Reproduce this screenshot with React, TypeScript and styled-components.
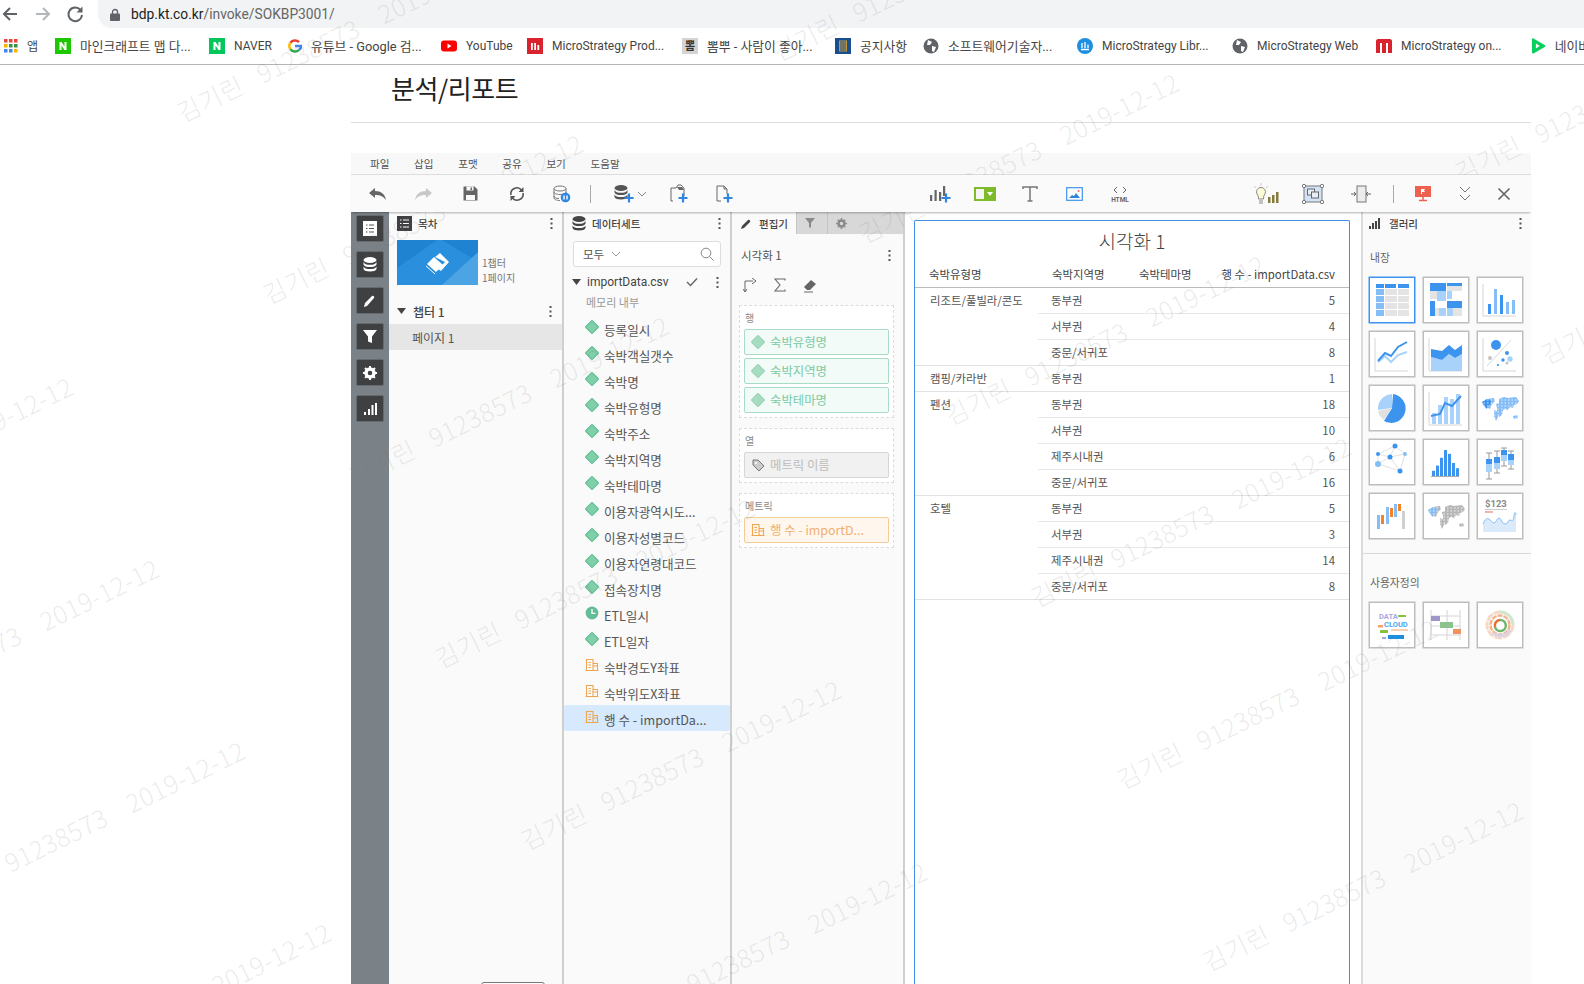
import React from 'react';
import styled, {createGlobalStyle} from 'styled-components';

const KR = `"Noto Sans CJK KR", sans-serif`;
const UI = `"Roboto", "Noto Sans CJK KR", sans-serif`;
const APP = `"Open Sans", "Noto Sans CJK KR", sans-serif`;
const BLUE = '#3d94ee';
const LIGHT = '#a9d2fb';
const MID = '#85bdf6';

const Global = createGlobalStyle`
  html, body { margin: 0; padding: 0; background: #fff; }
  * { box-sizing: border-box; }
`;
const Page = styled.div`
  position: relative;
  width: 1584px;
  height: 984px;
  overflow: hidden;
  display: flex;
  flex-direction: column;
  font-family: ${APP};
  color: #555;
`;
const TopBar = styled.div`
  height: 28px;
  flex: none;
  display: flex;
  align-items: center;
`;
const NavSlot = styled.div`
  width: 32.5px;
  height: 28px;
  flex: none;
  display: flex;
  align-items: center;
  justify-content: center;
  &:first-child { margin-left: -6px; }
`;
const UrlBar = styled.div`
  margin-left: 6.5px;
  flex: 1;
  height: 28px;
  background: #f1f3f4;
  border-radius: 0 0 0 14px;
  display: flex;
  align-items: center;
  padding-left: 12px;
  gap: 11px;
  font: 13.8px ${UI};
  color: #222;
`;
const UrlRest = styled.span`
  color: #666;
`;
const BookmarkBar = styled.div`
  height: 37px;
  flex: none;
  display: flex;
  align-items: center;
  padding: 0 0 1px 4px;
  border-bottom: 1px solid #b4b4b4;
  overflow: hidden;
`;
const Bookmark = styled.div<{$w: number; $kr?: boolean}>`
  width: ${p => p.$w}px;
  flex: none;
  display: flex;
  align-items: center;
  gap: 9px;
  font: ${p => (p.$kr ? 12.8 : 12)}px ${UI};
  color: #444;
  white-space: nowrap;
`;
const Content = styled.div`
  flex: 1;
  min-height: 0;
  margin-left: 351px;
  width: 1180px;
  display: flex;
  flex-direction: column;
`;
const PageTitle = styled.h1`
  margin: 0 0 30px;
  height: 58px;
  flex: none;
  padding: 3px 0 0 40px;
  border-bottom: 1px solid #ddd;
  font: 400 26px/40px ${KR};
  letter-spacing: -0.4px;
  color: #222;
`;
const MenuBar = styled.div`
  height: 22px;
  flex: none;
  background: #f8f8f8;
  border-bottom: 1px solid #ddd;
  display: flex;
  align-items: center;
  gap: 24.6px;
  padding-left: 19px;
  font: 10.6px ${KR};
  color: #555;
`;
const Toolbar = styled.div`
  height: 37px;
  flex: none;
  position: relative;
  z-index: 1;
  background: #fafafa;
  box-shadow: 0 2px 2px -1px rgba(0, 0, 0, 0.3);
  display: flex;
  align-items: center;
  padding-left: 5px;
`;
const ToolButton = styled.div<{$w: number; $ml?: number}>`
  width: ${p => p.$w}px;
  margin-left: ${p => p.$ml || 0}px;
  height: 36px;
  flex: none;
  display: flex;
  align-items: center;
  justify-content: center;
`;
const ToolSep = styled.div<{$w: number}>`
  width: ${p => p.$w}px;
  height: 18px;
  flex: none;
  display: flex;
  justify-content: center;
  &::after { content: ''; width: 1px; background: #aaa; }
`;
const ToolGap = styled.div`
  flex: 1;
`;
const Workspace = styled.div`
  flex: 1;
  min-height: 0;
  display: flex;
`;
const Rail = styled.div`
  width: 38px;
  flex: none;
  background: #7b8287;
  display: flex;
  flex-direction: column;
  align-items: center;
  gap: 9px;
  padding: 3px 1px 0 0;
`;
const RailButton = styled.div`
  width: 28px;
  height: 27px;
  background: #3f4042;
  border: 1px solid #666a6e;
  border-radius: 2px;
  display: flex;
  align-items: center;
  justify-content: center;
`;
const Panel = styled.div<{$w: number}>`
  width: ${p => p.$w}px;
  flex: none;
  background: #fafafa;
  border-right: 2px solid #cfcfcf;
  display: flex;
  flex-direction: column;
`;
const PanelHeader = styled.div<{$pad: number; $gap?: number}>`
  height: 23px;
  flex: none;
  display: flex;
  align-items: center;
  gap: ${p => p.$gap || 6}px;
  padding: 0 9px 0 ${p => p.$pad}px;
  font: 500 10.5px ${KR};
  color: #444;
`;
const Grow = styled.span`
  flex: 1;
`;
const ThumbRow = styled.div`
  display: flex;
  align-items: flex-end;
  gap: 4px;
  padding: 5px 0 0 8px;
`;
const ThumbInfo = styled.div`
  font: 10px/15px ${KR};
  color: #777;
`;
const ChapterRow = styled.div`
  display: flex;
  align-items: center;
  gap: 7px;
  margin-top: 15px;
  height: 22px;
  padding: 0 10px 0 8px;
  font: 500 12px ${KR};
  color: #444;
`;
const PageRow = styled.div`
  height: 26px;
  margin-top: 2px;
  background: #e6e6e6;
  display: flex;
  align-items: center;
  padding-left: 23px;
  font: 12px ${KR};
  color: #555;
`;
const SearchBox = styled.div`
  margin: 6px 9px 0;
  height: 26px;
  background: #fff;
  border: 1px solid #ddd;
  border-radius: 3px;
  display: flex;
  align-items: center;
  gap: 7px;
  padding: 0 6px 0 9px;
  font: 11.5px ${KR};
  color: #555;
`;
const SourceRow = styled.div`
  height: 20px;
  margin-top: 5px;
  display: flex;
  align-items: center;
  padding: 0 11px 0 8px;
  font: 12px ${UI};
  color: #444;
  gap: 6px;
`;
const SourceNote = styled.div`
  height: 20px;
  padding-left: 22px;
  margin-bottom: 3px;
  font: 11px/20px ${KR};
  color: #999;
`;
const FieldRow = styled.div<{$active?: boolean}>`
  height: 26px;
  display: flex;
  align-items: center;
  padding-left: 21px;
  gap: 5px;
  background: ${p => (p.$active ? '#d6e9fd' : 'transparent')};
  border-radius: 2px;
  font: 12.6px ${KR};
  color: #555;
  white-space: nowrap;
  & > svg { margin-top: -2px; }
  & > span { margin-top: 2px; }
`;
const TabRow = styled.div`
  height: 22px;
  flex: none;
  display: flex;
`;
const ActiveTab = styled.div`
  width: 64px;
  display: flex;
  align-items: center;
  gap: 7px;
  padding-left: 9px;
  font: 500 10.5px ${KR};
  color: #444;
  white-space: nowrap;
`;
const GreyTab = styled.div<{$w: number}>`
  width: ${p => p.$w}px;
  background: #d8d8d8;
  border-left: 1px solid #c4c4c4;
  display: flex;
  align-items: center;
  padding-left: 8px;
`;
const VizTitleRow = styled.div`
  margin-top: 10px;
  height: 22px;
  display: flex;
  align-items: center;
  padding: 0 12px 0 7px;
  font: 11.5px ${KR};
  color: #555;
`;
const FormulaRow = styled.div`
  margin-top: 10px;
  height: 18px;
  display: flex;
  align-items: center;
  gap: 16px;
  padding-left: 9px;
`;
const EditorBody = styled.div`
  padding: 0 0 0 2px;
`;
const DropZone = styled.div`
  margin: 11px 9px 0 5px;
  border: 1px dashed #dcdcdc;
  background: #fff;
  padding: 3px 4px 4px;
  & + & { margin-top: 10px; }
`;
const ZoneLabel = styled.div`
  height: 17px;
  font: 10px/17px ${KR};
  color: #888;
  padding-left: 1px;
`;
const Pill = styled.div<{$kind: 'attr' | 'none' | 'metric'}>`
  height: 26px;
  margin-top: 3px;
  border-radius: 2px;
  display: flex;
  align-items: center;
  padding-left: 6px;
  gap: 5px;
  font: 12.4px ${KR};
  white-space: nowrap;
  border: 1px solid ${p => ({attr: '#a8dcc4', none: '#d6d6d6', metric: '#f3cc98'}[p.$kind])};
  background: ${p => ({attr: '#f2fbf7', none: '#f1f1f1', metric: '#fff7ee'}[p.$kind])};
  color: ${p => ({attr: '#7ccaa6', none: '#bdbdbd', metric: '#efaf72'}[p.$kind])};
`;
const Canvas = styled.div`
  width: 456px;
  flex: none;
  background: #fff;
  padding: 8px 11px 0 9px;
  display: flex;
`;
const Frame = styled.div`
  flex: 1;
  border: 1px solid #3f8fe6;
  border-bottom: 0;
  border-radius: 2px 2px 0 0;
`;
const VizHeading = styled.div`
  height: 44px;
  padding-top: 3px;
  text-align: center;
  font: 300 19px/34px ${KR};
  color: #444;
`;
const TableHead = styled.div`
  height: 23px;
  padding-top: 0;
  display: flex;
  align-items: flex-start;
  border-bottom: 1px solid #bbb;
  font: 11.4px/18px ${KR};
  color: #444;
`;
const HeadCell = styled.div<{$w: number; $right?: boolean}>`
  width: ${p => p.$w}px;
  flex: none;
  padding-left: ${p => (p.$right ? 0 : 14)}px;
  text-align: ${p => (p.$right ? 'right' : 'left')};
  white-space: nowrap;
`;
const Group = styled.div`
  display: flex;
  border-bottom: 1px solid #e2e2e2;
`;
const GroupName = styled.div`
  width: 123px;
  flex: none;
  padding: 3px 0 0 15px;
  font: 11.4px/18px ${KR};
  color: #555;
`;
const Rows = styled.div`
  flex: 1;
`;
const SubRow = styled.div`
  height: 26px;
  display: flex;
  justify-content: space-between;
  padding: 3px 14px 0 13px;
  border-bottom: 1px solid #e8e8e8;
  font: 11.4px/18px ${KR};
  color: #555;
  &:last-child { height: 25px; border-bottom: 0; }
`;
const Gallery = styled.div`
  width: 170px;
  flex: none;
  background: #fafafa;
  border-left: 2px solid #dadada;
  display: flex;
  flex-direction: column;
`;
const GallerySection = styled.div<{$top: number}>`
  margin-top: ${p => p.$top}px;
  padding-left: 7px;
  height: 20px;
  font: 10.8px/20px ${KR};
  color: #666;
`;
const TileGrid = styled.div`
  margin: 10px 0 0 6px;
  display: grid;
  grid-template-columns: repeat(3, 46px);
  grid-auto-rows: 46px;
  gap: 8px;
`;
const Tile = styled.div<{$on?: boolean}>`
  background: #fff;
  border: 1px solid ${p => (p.$on ? BLUE : '#bdbdbd')};
  box-shadow: 0 0 0 0.5px ${p => (p.$on ? BLUE : '#bdbdbd')};
  & > svg { display: block; margin: -1px; }
`;
const GalleryRule = styled.div`
  margin-top: 14px;
  height: 1px;
  background: #d8d8d8;
`;
const Watermark = styled.div`
  position: absolute;
  transform-origin: left center;
  transform: rotate(-26deg);
  font: 300 25px/30px ${KR};
  letter-spacing: 0.5px;
  color: rgba(110, 110, 110, 0.15);
  white-space: pre;
  pointer-events: none;
`;
const PeekTab = styled.div`
  position: absolute;
  left: 481px;
  top: 982px;
  width: 64px;
  height: 8px;
  background: #fff;
  border: 1px solid #777;
  border-radius: 3px 3px 0 0;
`;

type IconProps = {w?: number; h?: number; children: React.ReactNode};
const Ic = ({w = 20, h = 20, children}: IconProps) => (
  <svg width={w} height={h} viewBox={`0 0 ${w} ${h}`} fill="none">{children}</svg>
);
const Plus = ({x, y}: {x: number; y: number}) => (
  <path d={`M${x - 4.5} ${y}h9M${x} ${y - 4.5}v9`} stroke="#2f86e0" strokeWidth="2.2" />
);
const Diamond = ({light}: {light?: boolean}) => (
  <svg width="14" height="14" viewBox="0 0 14 14">
    <rect x="2.3" y="2.3" width="9.4" height="9.4" rx="0.8" transform="rotate(45 7 7)"
      fill={light ? '#a5dcc2' : '#7fcfa9'} stroke={light ? '#96d3b6' : '#5cbb90'} />
  </svg>
);
const Clock = () => (
  <svg width="14" height="14" viewBox="0 0 14 14">
    <circle cx="7" cy="7" r="6.4" fill="#62bd96" />
    <path d="M7 3v4.4h3.4" stroke="#fff" strokeWidth="1.3" fill="none" />
  </svg>
);
const Metric = () => (
  <svg width="14" height="14" viewBox="0 0 14 14" fill="none" stroke="#efa552" strokeWidth="1.1">
    <path d="M1.5 12.5V1.5h6.5v11M8 5.5h4.5v7M.5 12.5h13M3.5 4.5h2.5M3.5 7h2.5M3.5 9.5h2.5M8 8h4.5" />
  </svg>
);
const Kebab = () => (
  <svg width="3" height="11" viewBox="0 0 3 11" fill="#555">
    <rect x="0.5" y="0" width="2" height="2" /><rect x="0.5" y="4.5" width="2" height="2" /><rect x="0.5" y="9" width="2" height="2" />
  </svg>
);
const Caret = () => (
  <svg width="9" height="7" viewBox="0 0 9 7"><path d="M0 0h9L4.5 6z" fill="#444" /></svg>
);
const DbIcon = ({fill}: {fill: string}) => (
  <g fill={fill}>
    <ellipse cx="7" cy="3" rx="6.5" ry="3" />
    <path d="M.5 5c1 2 3 2.800 6.500 2.800S12.500 7 13.500 5v2.500C12.500 9.500 10.500 10 7 10S1.500 9.500.5 7.500z" />
    <path d="M.5 9.500c1 2 3 2.500 6.500 2.500s5.500-.5 6.500-2.500V12c-1 1.800-3 2.500-6.500 2.500S1.500 13.800.5 12z" />
  </g>
);

const Lightbulb = () => (
  <Ic w={28} h={24}>
    <path d="M9 1v3M2 4l2 2M16 4l-2 2" stroke="#c9c9c9" />
    <path d="M5 12a4.500 4.500 0 1 1 8 0c-1 1.500-1.500 2-1.500 5h-5c0-3-.5-3.500-1.500-5z" fill="#fbfbd8" stroke="#888" />
    <path d="M7 19h4M7 21h4" stroke="#888" />
    <path d="M16 15h2.500v6H16zM20 13h2.500v8H20zM24 10h2.500v11H24z" fill="#857b3e" />
  </Ic>
);

const leftTools = [
  {w: 44, icon: <Ic w={20} h={14}><path d="M7 1 1 6l6 5V8c5 0 8 1 11 5-1-6-5-9-11-9z" fill="#666" /></Ic>},
  {w: 46, icon: <Ic w={20} h={14}><path d="M13 1l6 5-6 5V8C8 8 5 9 2 13c1-6 5-9 11-9z" fill="#c8c8c8" /></Ic>},
  {w: 48, icon: <Ic w={15} h={15}><path d="M.5.5h11l3 3v11H.5z" fill="#666" /><path d="M3.500 .5h7v4h-7zM3 9h9v5H3z" fill="#fafafa" /><path d="M7.500 1.500h1.500v2.500H7.500z" fill="#666" /></Ic>},
  {w: 46, icon: <Ic w={16} h={16}><path d="M2 9A6 6 0 0 1 12.500 4M14 7a6 6 0 0 1-10.500 5" stroke="#555" strokeWidth="1.600" /><path d="M14.500 1v5h-5zM1.500 15v-5h5z" fill="#555" /></Ic>},
  {w: 44, icon: <Ic w={18} h={18}><ellipse cx="7" cy="3.500" rx="6" ry="2.500" stroke="#777" /><path d="M1 3.500V13c0 1.400 2.500 2.500 6 2.500M13 3.500V8M1 7c0 1.400 2.500 2.500 6 2.500s6-1 6-2.500M1 11c0 1.400 2 2.400 5 2.500" stroke="#777" /><circle cx="12.500" cy="12.500" r="4.800" fill="#2f86e0" /><path d="M11 10.500v4M14 10.500v4" stroke="#fff" strokeWidth="1.400" /></Ic>},
];

const rightIcons = [
  {w: 46, icon: <Lightbulb />},
  {w: 48, icon: <Ic w={22} h={20}><rect x="2" y="2" width="18" height="16" fill="#d3e3f5" stroke="#777" /><rect x="5.500" y="5" width="7" height="6" fill="#e8eef5" stroke="#666" /><rect x="9.500" y="8" width="7" height="6" fill="#e8eef5" stroke="#666" /><g fill="#fff" stroke="#777"><circle cx="2" cy="2" r="1.700" /><circle cx="20" cy="2" r="1.700" /><circle cx="2" cy="18" r="1.700" /><circle cx="20" cy="18" r="1.700" /></g></Ic>},
  {w: 48, icon: <Ic w={20} h={18}><rect x="6" y="1" width="9" height="16" fill="#ececec" stroke="#777" /><path d="M0 9h5M3 7l2 2-2 2M20 9h-5M17 7l-2 2 2 2" stroke="#666" /></Ic>},
];

const bookmarks: {w: number; label: string; kr?: boolean; icon: React.ReactNode}[] = [
  {w: 51, label: '앱', icon: <Ic w={14} h={14}>{[0, 5, 10].map(y => [0, 5, 10].map(x => <rect key={`${x}${y}`} x={x} y={y} width="3.500" height="3.500" fill={y === 0 ? '#e8453c' : y === 5 ? (x === 0 ? '#f4b400' : '#3b8f47') : x === 10 ? '#f4b400' : '#4285f4'} />))}</Ic>},
  {w: 154, kr: true, label: '마인크래프트 맵 다...', icon: <Ic w={16} h={16}><rect width="16" height="16" fill="#1ec800" /><path d="M4.500 12V4h2l3 4.500V4h2v8h-2l-3-4.500V12z" fill="#fff" /></Ic>},
  {w: 79, label: 'NAVER', icon: <Ic w={16} h={16}><rect width="16" height="16" fill="#03c75a" /><path d="M4.500 12V4h2l3 4.500V4h2v8h-2l-3-4.500V12z" fill="#fff" /></Ic>},
  {w: 153, kr: true, label: '유튜브 - Google 검...', icon: <Ic w={14} h={14}><g transform="translate(-1 -1)" strokeWidth="2.500"><path d="M3.400 4.800A5.600 5.600 0 0 1 12 4.100" stroke="#ea4335" /><path d="M3.400 4.800a5.600 5.600 0 0 0 0 6.400" stroke="#fbbc05" /><path d="M3.400 11.200A5.600 5.600 0 0 0 12 11.900" stroke="#34a853" /><path d="M8 8h6.500A5.600 5.600 0 0 1 12 11.900" stroke="#4285f4" /></g></Ic>},
  {w: 86, label: 'YouTube', icon: <Ic w={16} h={16}><rect y="2.500" width="16" height="11" rx="3" fill="#f00" /><path d="M6.500 5.500v5l4-2.500z" fill="#fff" /></Ic>},
  {w: 155, label: 'MicroStrategy Prod...', icon: <Ic w={16} h={16}><rect width="16" height="16" fill="#d9232e" /><path d="M4 12V5h1.800v7zM7.200 12V5H9v7zM10.400 12V7h1.800v5z" fill="#fff" /></Ic>},
  {w: 153, kr: true, label: '뽐뿌 - 사람이 좋아...', icon: <svg width="16" height="16" viewBox="0 0 16 16"><rect width="16" height="16" fill="#d4d4d4" /><text x="8" y="12" textAnchor="middle" fontSize="11" fontFamily="Noto Sans CJK KR" fontWeight="700" fill="#333">뽐</text></svg>},
  {w: 88, kr: true, label: '공지사항', icon: <Ic w={16} h={16}><rect width="16" height="16" fill="#1a4f8f" /><rect x="4" y="2.500" width="8" height="11" fill="#c8973a" /><path d="M6 3v10M8 3v10M10 3v10" stroke="#1a4f8f" /></Ic>},
  {w: 154, kr: true, label: '소프트웨어기술자...', icon: <Ic w={16} h={16}><circle cx="8" cy="8" r="7.500" fill="#5f6368" /><path d="M5 2l4 2-2 3-3 0zM9 8l4 1-2 5-2-1z" fill="#fff" /></Ic>},
  {w: 155, label: 'MicroStrategy Libr...', icon: <Ic w={16} h={16}><circle cx="8" cy="8" r="8" fill="#1d8fe1" /><path d="M5 5v5M8 4v6M11 6.500V10M4 11.500h8" stroke="#fff" strokeWidth="1.300" /></Ic>},
  {w: 144, label: 'MicroStrategy Web', icon: <Ic w={16} h={16}><circle cx="8" cy="8" r="7.500" fill="#5f6368" /><path d="M5 2l4 2-2 3-3 0zM9 8l4 1-2 5-2-1z" fill="#fff" /></Ic>},
  {w: 154, label: 'MicroStrategy on...', icon: <Ic w={16} h={16}><path d="M0 15V3c0-1 1-2 2-2h12c1 0 2 1 2 2v12h-4V5h-2v10H6V5H4v10z" fill="#d9232e" /></Ic>},
  {w: 60, kr: true, label: '네이버', icon: <Ic w={16} h={16}><path d="M2 1c0-1 1-1 2-.500l11 6.500c1 .5 1 1.500 0 2L4 15.500c-1 .500-2 0-2-1z" fill="#08cf5d" /><path d="M6 5.500v5l4-2.500z" fill="#fff" /></Ic>},
];

const tile = (n: React.ReactNode) => <svg width="46" height="46" viewBox="0 0 46 46">{n}</svg>;
const axes = <path d="M6 7v33h33" stroke="#d6d6d6" fill="none" />;
const worldDots = (color: string, accent: string) => (
  <g>
    <path d="M5 17l5-3 7-1 1 3-3 3-2 5-4-2zM17 25l4 2 0 5-2 4-2-5zM22 14l5-2 4 1 8-1 3 4-2 3-3 1-1 3-3-1-2 3-3-1-2 1-1 5-3 2-2-5v-4l-1-4 3-1z" fill={color} />
    <path d="M36 31l4-1 1 3-4 1z" fill={color} />
    <path d="M5 17l5-3 4 1 0 4-3 2-1 3-3-3z" fill={accent} />
    <path d="M3 15h40M3 18h40M3 21h40M3 24h40M3 27h40M3 30h40M3 33h40" stroke="#fff" strokeWidth="0.8" strokeDasharray="1.500 2" />
  </g>
);
const galleryBuilt: React.ReactNode[] = [
  tile(<g>
    <path d="M7 7h8v4H7zM16 7h11v4H16zM29 7h11v4H29z" fill={BLUE} />
    {[12, 19, 26, 33].map(y => <g key={y}><rect x="7" y={y} width="8" height="6" fill={MID} /><rect x="16" y={y} width="12" height="6" fill="#e4e4e4" /><rect x="29" y={y} width="11" height="6" fill="#e4e4e4" /></g>)}
  </g>),
  tile(<g>
    <path d="M7 6h16v8H7zM24 6h15v3H24zM7 24h5v15H7zM24 24h15v7H24z" fill={BLUE} />
    <path d="M24 9h15v5H24zM7 14h7v8H7zM30 31h9v8h-9z" fill="#e4e4e4" />
    <path d="M14 14h9v10h-9zM24 14h5v8h-5zM16 31h7v8h-7zM24 31h6v8h-6z" fill={LIGHT} />
    <path d="M12 31h4v8h-4z" fill="#e4e4e4" />
  </g>),
  tile(<g>
    <path d="M6 7v32h33" stroke="#d6d6d6" fill="none" />
    <rect x="11" y="27" width="3" height="10" fill={BLUE} /><rect x="17" y="12" width="3" height="25" fill={MID} />
    <rect x="23" y="18" width="3" height="19" fill={BLUE} /><rect x="29" y="25" width="3" height="12" fill={MID} /><rect x="35" y="23" width="3" height="14" fill={MID} />
  </g>),
  tile(<g>{axes}
    <path d="M9 31l7-6 6 6 7-7 9-3" stroke={LIGHT} strokeWidth="2" fill="none" />
    <path d="M9 30l7-8 6 3 7-9 9-5" stroke={BLUE} strokeWidth="2" fill="none" />
  </g>),
  tile(<g>{axes}
    <path d="M8 26l11 3 7-6 6 4 7-4v17H8z" fill={LIGHT} />
    <path d="M8 18l11 2 7-6 6 5 7-5v9l-7 4-6-4-7 6-11-3z" fill={BLUE} />
  </g>),
  tile(<g>{axes}
    <path d="M10 35L34 9" stroke="#d8d8d8" />
    <circle cx="19" cy="14" r="5" fill={BLUE} /><circle cx="30" cy="22" r="2" fill={BLUE} /><circle cx="13" cy="27" r="2" fill="#c4c4c4" />
    <circle cx="26" cy="29" r="1.700" fill={BLUE} /><circle cx="33" cy="28" r="2.700" fill={LIGHT} /><circle cx="30" cy="32" r="1.500" fill="#c4c4c4" /><circle cx="21" cy="34" r="1.100" fill={BLUE} />
  </g>),
  tile(<g>
    <path d="M23 23l1-14a14.500 14.500 0 1 1-9 27z" fill={BLUE} />
    <path d="M23 23l-14 2a14.500 14.500 0 0 1 14-16z" fill={LIGHT} />
    <path d="M23 23l-8 12a14.500 14.500 0 0 1-6-9z" fill="#e0e0e0" />
  </g>),
  tile(<g>
    <path d="M6 7v33h33" stroke="#d6d6d6" fill="none" />
    {[9, 15, 21, 27, 33].map((x, i) => <rect key={x} x={x} y={[28, 20, 12, 14, 9][i]} width="4" height={[11, 19, 27, 25, 30][i]} fill={LIGHT} />)}
    <path d="M8 31l9-2 5-11 7 3 9-10" stroke={BLUE} strokeWidth="2" fill="none" />
  </g>),
  tile(worldDots(MID, BLUE)),
  tile(<g>
    <path d="M9 15L26 7 36 15 31 32 9 25zM9 15L21 18 26 7M21 18L36 15M21 18L31 32M21 18L9 25" stroke="#e2e2e2" fill="none" />
    <circle cx="9" cy="15" r="2" fill={BLUE} /><circle cx="26" cy="7" r="2.500" fill={BLUE} /><circle cx="36" cy="15" r="2" fill={MID} />
    <circle cx="21" cy="18" r="2.500" fill={BLUE} /><circle cx="9" cy="25" r="3" fill={MID} /><circle cx="31" cy="32" r="2.500" fill={BLUE} />
  </g>),
  tile(<g>
    {[[9, 4], [13, 8], [17, 14], [21, 20], [25, 17], [29, 10], [33, 6]].map(([x, h]) => <rect key={x} x={x} y={37 - h * 1.300} width="3" height={h * 1.300} fill={BLUE} />)}
    <path d="M8 37.500h28" stroke="#aaa" />
  </g>),
  tile(<g>
    <path d="M12 14v26M20 12v22M27 9v18M34 12v18M9 14h6M9 40h6M17 12h6M24 9h6M31 12h6M31 30h6M24 27h6M17 34h6" stroke="#999" fill="none" />
    <rect x="9" y="20" width="6" height="5" fill={BLUE} /><rect x="9" y="25" width="6" height="8" fill={LIGHT} />
    <rect x="17" y="18" width="6" height="6" fill={BLUE} /><rect x="17" y="24" width="6" height="6" fill={LIGHT} />
    <rect x="24" y="11" width="6" height="5" fill={BLUE} /><rect x="24" y="16" width="6" height="6" fill={LIGHT} />
    <rect x="31" y="15" width="6" height="6" fill={BLUE} /><rect x="31" y="21" width="6" height="5" fill={LIGHT} />
  </g>),
  tile(<g>
    <rect x="8" y="22" width="3" height="14" fill={MID} /><rect x="12" y="22" width="3" height="9" fill="#f58228" />
    <rect x="17" y="14" width="3" height="17" fill={MID} /><rect x="21" y="15" width="3" height="9" fill="#f58228" />
    <rect x="25" y="11" width="3" height="13" fill={MID} /><rect x="29" y="11" width="3" height="7" fill="#f58228" />
    <rect x="33" y="18" width="3" height="18" fill="#cfcfcf" />
  </g>),
  tile(worldDots('#b7b7b7', MID)),
  tile(<g>
    <text x="8" y="14" fontFamily="Roboto, sans-serif" fontWeight="700" fontSize="9.500" fill="#8a8a8a">$123</text>
    <path d="M8 16.500h22" stroke="#ccc" /><rect x="8" y="18" width="8" height="2" fill="#f4b4ae" />
    <path d="M6 31c2-5 4-6 6-5s3 4 5 4 3-5 5-5 3 6 6 6 3-4 5-4 3 3 4-4 2-1 2-1v17H6z" fill="#dbeafb" />
    <path d="M6 31c2-5 4-6 6-5s3 4 5 4 3-5 5-5 3 6 6 6 3-4 5-4 3 3 4-4 2-1 2-1" stroke={MID} fill="none" />
  </g>),
];
const galleryCustom: React.ReactNode[] = [
  tile(<g>
    <text x="10" y="17" fontFamily="Roboto, sans-serif" fontWeight="700" fontSize="7.500" fill="#a7a7e0">DATA</text>
    <text x="15" y="24.500" fontFamily="Roboto, sans-serif" fontWeight="700" fontSize="7.500" fill="#4ea5ee">CLOUD</text>
    <rect x="29" y="13" width="8" height="2" fill="#88c040" /><rect x="9" y="23" width="5" height="2.500" fill="#f4a26a" />
    <path d="M22 28h17" stroke="#f4a26a" /><rect x="11" y="28" width="8" height="3" fill="#88c040" />
    <rect x="13" y="35" width="4" height="2" fill="#a7a7e0" /><rect x="19" y="33" width="16" height="4" fill="#1d8fe1" />
  </g>),
  tile(<g>
    <path d="M8 8v30M24 8v30M37 8v30M8 14h29M8 24h29M8 33h29" stroke="#d4d4d4" fill="none" />
    <rect x="8" y="14" width="9" height="5" fill="#9f97c9" /><rect x="17" y="20" width="13" height="6" fill="#8cc28b" /><rect x="30" y="27" width="8" height="5" fill="#f29160" />
  </g>),
  tile(<g fill="none">
    <circle cx="23" cy="23" r="13" stroke="#f5d9c6" strokeWidth="3" strokeDasharray="8 1" />
    <circle cx="23" cy="23" r="9.500" stroke="#f2b590" strokeWidth="2.500" strokeDasharray="5 1" />
    <path d="M23 18a5.500 5.500 0 1 1-5 7" stroke="#6fb56f" strokeWidth="2.500" />
    <path d="M18 25a5.500 5.500 0 0 1 5-7" stroke="#e8702f" strokeWidth="2.500" />
    <path d="M23 10a13 13 0 0 1 13 13" stroke="#cfe6cf" strokeWidth="3" />
    <path d="M33 28a11 11 0 0 1-17 3" stroke="#d9d3ea" strokeWidth="3" />
  </g>),
];

const fields: {name: string; kind: 'attr' | 'time' | 'metric'}[] = [
  {name: '등록일시', kind: 'attr'}, {name: '숙박객실갯수', kind: 'attr'}, {name: '숙박명', kind: 'attr'},
  {name: '숙박유형명', kind: 'attr'}, {name: '숙박주소', kind: 'attr'}, {name: '숙박지역명', kind: 'attr'},
  {name: '숙박테마명', kind: 'attr'}, {name: '이용자광역시도...', kind: 'attr'}, {name: '이용자성별코드', kind: 'attr'},
  {name: '이용자연령대코드', kind: 'attr'}, {name: '접속장치명', kind: 'attr'}, {name: 'ETL일시', kind: 'time'},
  {name: 'ETL일자', kind: 'attr'}, {name: '숙박경도Y좌표', kind: 'metric'}, {name: '숙박위도X좌표', kind: 'metric'},
  {name: '행 수 - importDa...', kind: 'metric'},
];

const groups = [
  {name: '리조트/풀빌라/콘도', rows: [['동부권', 5], ['서부권', 4], ['중문/서귀포', 8]]},
  {name: '캠핑/카라반', rows: [['동부권', 1]]},
  {name: '펜션', rows: [['동부권', 18], ['서부권', 10], ['제주시내권', 6], ['중문/서귀포', 16]]},
  {name: '호텔', rows: [['동부권', 5], ['서부권', 3], ['제주시내권', 14], ['중문/서귀포', 8]]},
];

// diagonal lattice the stamp repeats on
const marks: {x: number; y: number}[] = [];
for (let i = -1; i < 4; i++) {
  for (let j = -4; j < 5; j++) {
    marks.push({x: 436 + i * 596 + j * 86, y: 644 - i * 61 + j * 182});
  }
}

export default function App() {
  return (
    <Page>
      <Global />
      <TopBar>
        <NavSlot><Ic w={18} h={18}><path d="M16 9H3M9 3L3 9l6 6" stroke="#5f6368" strokeWidth="2" /></Ic></NavSlot>
        <NavSlot><Ic w={18} h={18}><path d="M2 9h13M9 3l6 6-6 6" stroke="#b5b8bb" strokeWidth="2" /></Ic></NavSlot>
        <NavSlot><Ic w={18} h={18}><path d="M14.500 5A6.800 6.800 0 1 0 16 10" stroke="#5f6368" strokeWidth="2" /><path d="M16.500 1.500v6h-6z" fill="#5f6368" /></Ic></NavSlot>
        <UrlBar>
          <Ic w={10} h={13}><path d="M2.500 6V4a2.500 2.500 0 0 1 5 0v2" stroke="#5f6368" strokeWidth="1.300" /><rect y="5.500" width="10" height="7.500" rx="1" fill="#5f6368" /></Ic>
          <span>bdp.kt.co.kr<UrlRest>/invoke/SOKBP3001/</UrlRest></span>
        </UrlBar>
      </TopBar>
      <BookmarkBar>
        {bookmarks.map(b => (
          <Bookmark key={b.label} $w={b.w} $kr={b.kr}>{b.icon}<span>{b.label}</span></Bookmark>
        ))}
      </BookmarkBar>
      <Content>
        <PageTitle>분석/리포트</PageTitle>
        <MenuBar>
          {['파일', '삽입', '포맷', '공유', '보기', '도움말'].map(m => <span key={m}>{m}</span>)}
        </MenuBar>
        <Toolbar>
          {leftTools.map((t, i) => <ToolButton key={i} $w={t.w}>{t.icon}</ToolButton>)}
          <ToolSep $w={12} />
          <ToolButton $w={22} $ml={18}>
            <Ic w={22} h={18}><DbIcon fill="#555" /><Plus x={15} y={13} /></Ic>
          </ToolButton>
          <ToolButton $w={12}>
            <Ic w={10} h={6}><path d="M1 1l4 4 4-4" stroke="#888" /></Ic>
          </ToolButton>
          <ToolButton $w={64}>
            <Ic w={20} h={20}><path d="M3 17H1V4h5M6 4l2-3h3l3 3v8" stroke="#666" /><path d="M7 3h5l2 3H9z" fill="#666" /><Plus x={13} y={14} /></Ic>
          </ToolButton>
          <ToolButton $w={26}>
            <Ic w={20} h={20}><path d="M6 17H2V2h7l3 3v5M9 2v3h3" stroke="#666" /><Plus x={13} y={14} /></Ic>
          </ToolButton>
          {[
            <Ic w={24} h={20} key="a"><path d="M2 11h2.200v6H2zM6.500 6h2.200v11H6.500zM11 8h2.200v9H11zM15 2h2.200v10H15z" fill="#666" /><Plus x={18} y={14} /></Ic>,
            <Ic w={22} h={14} key="b"><rect x=".5" y=".5" width="21" height="13" fill="#7fba2a" stroke="#7fba2a" /><rect x="2" y="2" width="8" height="10" fill="#f4f4f4" /><path d="M13 5h6l-3 4z" fill="#fff" /></Ic>,
            <Ic w={16} h={16} key="c"><path d="M1 3V1h14v2M8 1v14M5.500 15h5" stroke="#777" strokeWidth="1.500" /></Ic>,
            <Ic w={17} h={14} key="d"><rect x=".7" y=".7" width="15.600" height="12.600" fill="#fff" stroke="#3d94ee" strokeWidth="1.200" /><path d="M3 11l3-3 2 1 2-3 4 5z" fill="#2f86e0" /><circle cx="12.500" cy="4" r="1" fill="#ef6a5c" /></Ic>,
            <svg width="24" height="20" viewBox="0 0 24 20" key="e"><path d="M9 3L6 6l3 3M15 3l3 3-3 3" stroke="#666" fill="none" /><text x="12" y="18" textAnchor="middle" fontSize="6.500" fontWeight="700" fontFamily="Roboto, sans-serif" fill="#666">HTML</text></svg>,
          ].map((icon, i) => <ToolButton key={i} $w={45} $ml={i === 0 ? 179 : 0}>{icon}</ToolButton>)}
          <ToolGap />
          {rightIcons.map((t, i) => <ToolButton key={i} $w={t.w}>{t.icon}</ToolButton>)}
          <ToolSep $w={16} />
          <ToolButton $w={44}>
            <Ic w={16} h={18}><rect y="1" width="16" height="11" fill="#ee6150" /><path d="M6 4h4l-1 1.500L10 7H7v2H6z" fill="#fff" /><path d="M8 12v3M4 15.500h8" stroke="#ee6150" strokeWidth="1.500" /></Ic>
          </ToolButton>
          <ToolButton $w={40}>
            <Ic w={12} h={16}><path d="M1 1l5 5 5-5M1 9l5 5 5-5" stroke="#777" /></Ic>
          </ToolButton>
          <ToolButton $w={38}>
            <Ic w={14} h={14}><path d="M1.500 1.500l11 11M12.500 1.500l-11 11" stroke="#666" strokeWidth="1.700" /></Ic>
          </ToolButton>
          <ToolButton $w={8} />
        </Toolbar>
        <Workspace>
          <Rail>
            <RailButton><Ic w={14} h={15}><rect width="14" height="15" fill="#fff" /><path d="M3 4h1.500M6 4h5M3 7.500h1.500M6 7.500h5M3 11h1.500M6 11h5" stroke="#555" /></Ic></RailButton>
            <RailButton><Ic w={14} h={15}><DbIcon fill="#fff" /></Ic></RailButton>
            <RailButton><Ic w={14} h={14}><path d="M1 13l1-4 7-7c1-1 3 1 2 2L4 12z" fill="#fff" /></Ic></RailButton>
            <RailButton><Ic w={14} h={15}><path d="M0 1h14L9 7.500V14l-4-1.500V7.500z" fill="#fff" /></Ic></RailButton>
            <RailButton><Ic w={14} h={14}><circle cx="7" cy="7" r="4" stroke="#fff" strokeWidth="3.400" /><path d="M7 0v14M0 7h14M2 2l10 10M12 2L2 12" stroke="#fff" strokeWidth="2" strokeDasharray="2 10" /></Ic></RailButton>
            <RailButton><Ic w={14} h={13}><path d="M1 10h2v3H1zM5 7h2v6H5zM8.500 3h2v10h-2zM12 1h2v12h-2z" fill="#fff" /></Ic></RailButton>
          </Rail>
          <Panel $w={175}>
            <PanelHeader $pad={8}>
              <Ic w={15} h={15}><rect width="15" height="15" fill="#3f3f42" /><path d="M3 4h1.500M6 4h6M3 7.500h1.500M6 7.500h6M3 11h1.500M6 11h6" stroke="#fff" /></Ic>
              <span>목차</span>
              <Grow />
              <Kebab />
            </PanelHeader>
            <ThumbRow>
              <svg width="81" height="45" viewBox="0 0 81 45">
                <rect width="81" height="45" fill="#2a8fdd" />
                <path d="M0 0h40L0 28zM81 0H45l36 22z" fill="#1f83d2" />
                <path d="M45 45l36-33v33z" fill="#4da4e5" />
                <path d="M38 17l5-4 9 9-8 9-3-2 7-7z" fill="#fff" />
                <path d="M30 24l7-7 9 8-7 7z" fill="#fff" />
                <path d="M29 26l9 8" stroke="#fff" />
              </svg>
              <ThumbInfo>1챕터<br />1페이지</ThumbInfo>
            </ThumbRow>
            <ChapterRow>
              <Caret />
              <span>챕터 1</span>
              <Grow />
              <Kebab />
            </ChapterRow>
            <PageRow>페이지 1</PageRow>
          </Panel>
          <Panel $w={168}>
            <PanelHeader $pad={8}>
              <Ic w={14} h={15}><DbIcon fill="#444" /></Ic>
              <span>데이터세트</span>
              <Grow />
              <Kebab />
            </PanelHeader>
            <SearchBox>
              <span>모두</span>
              <Ic w={10} h={6}><path d="M1 1l4 4 4-4" stroke="#999" /></Ic>
              <Grow />
              <Ic w={14} h={14}><circle cx="6" cy="6" r="4.800" stroke="#888" /><path d="M9.500 9.500l4 4" stroke="#888" /></Ic>
            </SearchBox>
            <SourceRow>
              <Caret />
              <span>importData.csv</span>
              <Grow />
              <Ic w={12} h={10}><path d="M1 5l3.500 3.500L11 1.500" stroke="#666" strokeWidth="1.400" /></Ic>
              <Grow />
              <Kebab />
            </SourceRow>
            <SourceNote>메모리 내부</SourceNote>
            {fields.map((f, i) => (
              <FieldRow key={f.name} $active={i === fields.length - 1}>
                {f.kind === 'attr' ? <Diamond /> : f.kind === 'time' ? <Clock /> : <Metric />}
                <span>{f.name}</span>
              </FieldRow>
            ))}
          </Panel>
          <Panel $w={173}>
            <TabRow>
              <ActiveTab>
                <Ic w={11} h={11}><path d="M0 11l1-3 6-6c1-1 3 1 2 2L3 10z" fill="#444" /></Ic>
                <span>편집기</span>
              </ActiveTab>
              <GreyTab $w={31}>
                <Ic w={10} h={10}><path d="M0 0h10L6 5v5l-2-1V5z" fill="#8a8a8a" /></Ic>
              </GreyTab>
              <GreyTab $w={76}>
                <Ic w={11} h={11}><circle cx="5.500" cy="5.500" r="3" stroke="#8a8a8a" strokeWidth="2.500" /><path d="M5.500 0v11M0 5.500h11M1.700 1.700l7.600 7.600M9.300 1.700l-7.600 7.600" stroke="#8a8a8a" strokeWidth="1.500" strokeDasharray="1.500 8" /></Ic>
              </GreyTab>
            </TabRow>
            <EditorBody>
              <VizTitleRow>
                <span>시각화 1</span>
                <Grow />
                <Kebab />
              </VizTitleRow>
              <FormulaRow>
                <Ic w={14} h={15}><path d="M2 14V3h8M0 11l2 3 2-3M9 0l4 3-4 3" stroke="#666" /></Ic>
                <Ic w={14} h={14}><path d="M12 2.500V1H2l5 6-5 6h10v-1.500" stroke="#666" strokeWidth="1.100" /></Ic>
                <Ic w={15} h={15}><path d="M1 9l7-7 5 4-6 6H4z" fill="#666" /><path d="M1 14h9" stroke="#666" /></Ic>
              </FormulaRow>
              <DropZone>
                <ZoneLabel>행</ZoneLabel>
                {['숙박유형명', '숙박지역명', '숙박테마명'].map(n => (
                  <Pill key={n} $kind="attr"><Diamond light /><span>{n}</span></Pill>
                ))}
              </DropZone>
              <DropZone>
                <ZoneLabel>열</ZoneLabel>
                <Pill $kind="none">
                  <Ic w={14} h={14}><path d="M2 2h5l6 6-5 5-6-6z" fill="#ccc" stroke="#777" /><circle cx="5" cy="5" r="1" fill="#fff" /></Ic>
                  <span>메트릭 이름</span>
                </Pill>
              </DropZone>
              <DropZone>
                <ZoneLabel>메트릭</ZoneLabel>
                <Pill $kind="metric"><Metric /><span>행 수 - importD...</span></Pill>
              </DropZone>
            </EditorBody>
          </Panel>
          <Canvas>
            <Frame>
              <VizHeading>시각화 1</VizHeading>
              <TableHead>
                <HeadCell $w={123}>숙박유형명</HeadCell>
                <HeadCell $w={87}>숙박지역명</HeadCell>
                <HeadCell $w={80}>숙박테마명</HeadCell>
                <HeadCell $w={130} $right>행 수 - importData.csv</HeadCell>
              </TableHead>
              {groups.map(g => (
                <Group key={g.name}>
                  <GroupName>{g.name}</GroupName>
                  <Rows>
                    {g.rows.map(([region, n]) => (
                      <SubRow key={region}><span>{region}</span><span>{n}</span></SubRow>
                    ))}
                  </Rows>
                </Group>
              ))}
            </Frame>
          </Canvas>
          <Gallery>
            <PanelHeader $pad={6} $gap={9}>
              <Ic w={11} h={11}><path d="M0 8h2v3H0zM3 5h2v6H3zM6 3h2v8H6zM9 0h2v11H9z" fill="#444" /></Ic>
              <span>갤러리</span>
              <Grow />
              <Kebab />
            </PanelHeader>
            <GallerySection $top={12}>내장</GallerySection>
            <TileGrid>
              {galleryBuilt.map((n, i) => <Tile key={i} $on={i === 0}>{n}</Tile>)}
            </TileGrid>
            <GalleryRule />
            <GallerySection $top={18}>사용자정의</GallerySection>
            <TileGrid>
              {galleryCustom.map((n, i) => <Tile key={i}>{n}</Tile>)}
            </TileGrid>
          </Gallery>
        </Workspace>
      </Content>
      <PeekTab />
      {marks.map(m => (
        <Watermark key={`${m.x}-${m.y}`} style={{left: m.x, top: m.y}}>{'김기린   91238573    2019-12-12'}</Watermark>
      ))}
    </Page>
  );
}
